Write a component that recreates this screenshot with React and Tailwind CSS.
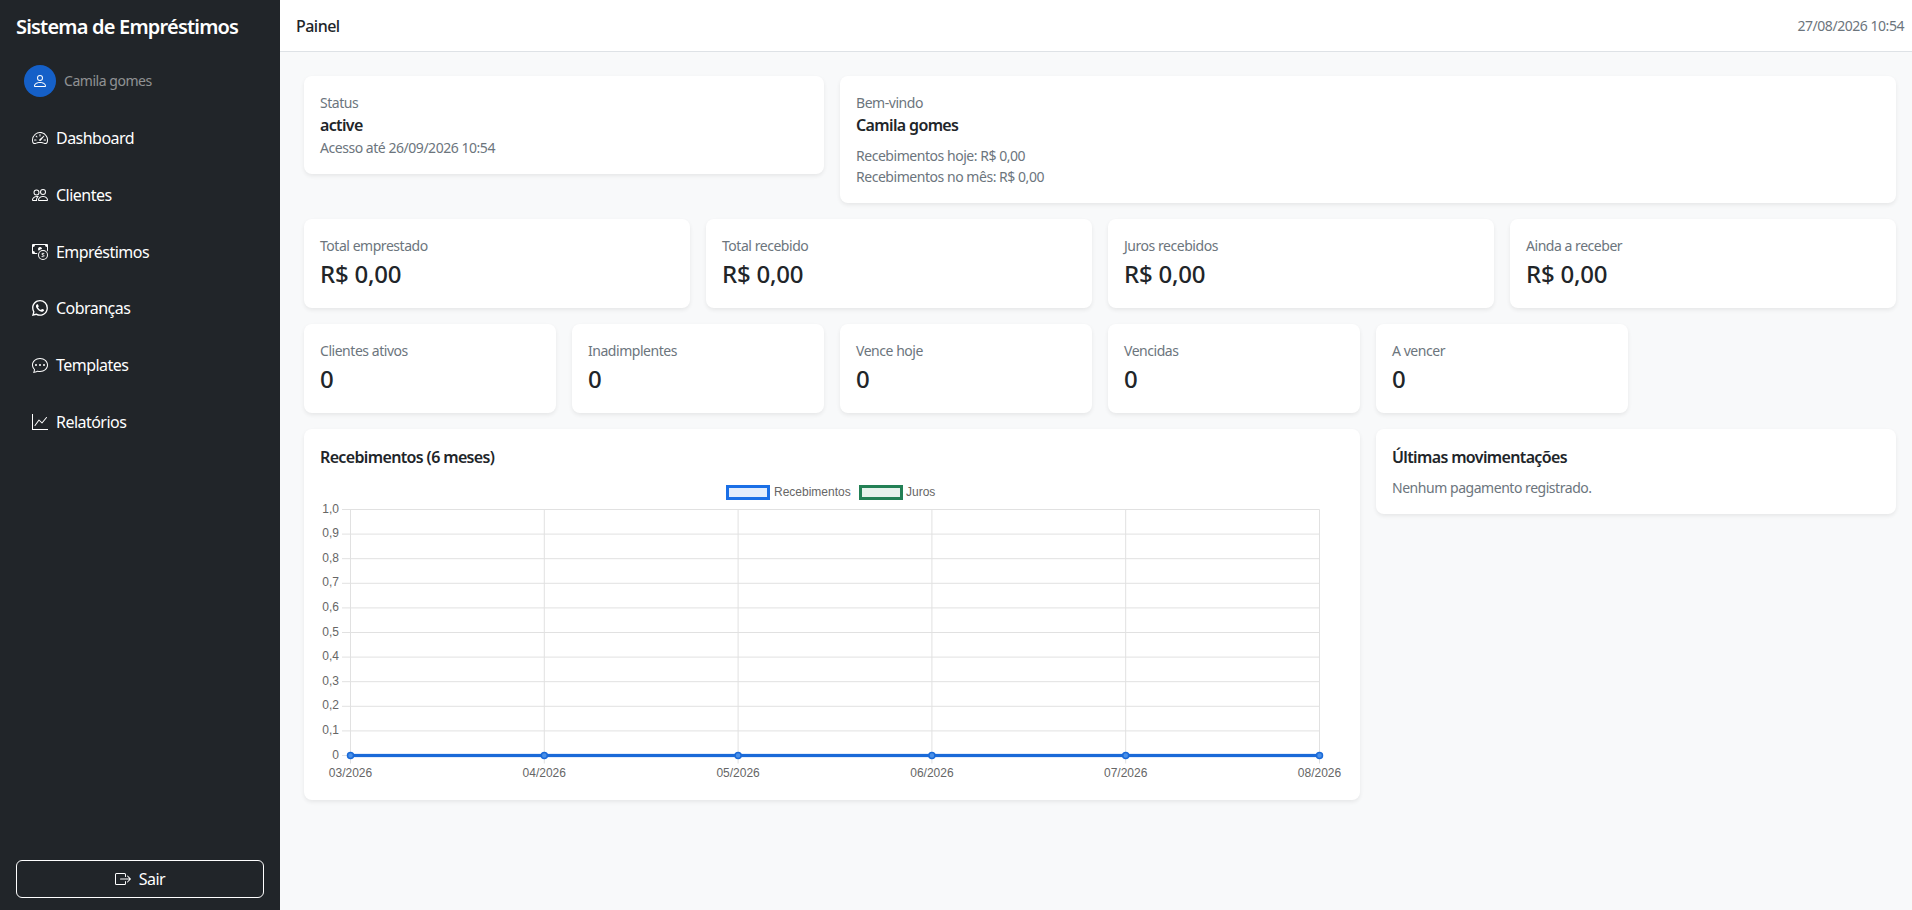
import React from 'react';
import { BsSpeedometer2, BsPeople, BsCashCoin, BsWhatsapp, BsChatDots, BsGraphUp, BsBoxArrowRight, BsPerson } from 'react-icons/bs';

const navItems = [
  { label: 'Dashboard', icon: BsSpeedometer2 },
  { label: 'Clientes', icon: BsPeople },
  { label: 'Empréstimos', icon: BsCashCoin },
  { label: 'Cobranças', icon: BsWhatsapp },
  { label: 'Templates', icon: BsChatDots },
  { label: 'Relatórios', icon: BsGraphUp },
];

const totals = ['Total emprestado', 'Total recebido', 'Juros recebidos', 'Ainda a receber'];
const counts = ['Clientes ativos', 'Inadimplentes', 'Vence hoje', 'Vencidas', 'A vencer'];

const Card = ({ className = '', children }) => (
  <div className={`bg-white rounded-lg p-4 shadow-[0_2px_4px_rgba(0,0,0,0.075)] ${className}`}>{children}</div>
);

const Muted = ({ className = '', children }) => (
  <div className={`text-sm leading-[21px] tracking-[-0.033em] text-[#6c757d] ${className}`}>{children}</div>
);

const Strong = ({ className = '', children }) => (
  <div className={`text-base leading-6 font-semibold tracking-[-0.04em] ${className}`}>{children}</div>
);

const StatCard = ({ label, value }) => (
  <Card>
    <Muted>{label}</Muted>
    <div className="text-2xl leading-9 font-medium tracking-[-0.01em] text-[#212529]">{value}</div>
  </Card>
);

const Chart = () => {
  const xs = [350.5, 544.3, 738.1, 931.9, 1125.7, 1319.5];
  const months = ['03/2026', '04/2026', '05/2026', '06/2026', '07/2026', '08/2026'];
  const ticks = ['1,0', '0,9', '0,8', '0,7', '0,6', '0,5', '0,4', '0,3', '0,2', '0,1', '0'];
  const top = 509.5;
  const zero = 755.5;
  const step = (zero - top) / 10;

  return (
    <svg width="1024" height="307" viewBox="320 477 1024 307" className="block" fontFamily="'Liberation Sans', Arial, sans-serif" fontSize="12" fill="#666666">
      {/* legend */}
      <rect x="727.5" y="486.5" width="41" height="12" fill="#e3edfc" stroke="#1a6fe6" strokeWidth="3" />
      <text x="774" y="495.5">Recebimentos</text>
      <rect x="860.5" y="486.5" width="41" height="12" fill="#e6f2ec" stroke="#238055" strokeWidth="3" />
      <text x="906" y="495.5">Juros</text>

      {/* grid */}
      {ticks.map((t, i) => (
        <g key={t}>
          <line x1="342" x2="1319.5" y1={top + i * step} y2={top + i * step} stroke="#e1e1e1" />
          <text x="339" y={top + i * step + 3} textAnchor="end">{t}</text>
        </g>
      ))}
      {xs.map((x, i) => (
        <g key={months[i]}>
          <line x1={x} x2={x} y1={top} y2={zero + 8} stroke="#e1e1e1" />
          <text x={x} y="776.5" textAnchor="middle">{months[i]}</text>
        </g>
      ))}

      {/* series */}
      <line x1={xs[0]} x2={xs[5]} y1={zero} y2={zero} stroke="#e3edfc" strokeWidth="5" />
      <line x1={xs[0]} x2={xs[5]} y1={zero} y2={zero} stroke="#1a6ad8" strokeWidth="3" />
      {xs.map((x) => (
        <circle key={x} cx={x} cy={zero} r="3" fill="#4a90e8" stroke="#1a6ad8" strokeWidth="1.5" />
      ))}
    </svg>
  );
};

export default function App() {
  return (
    <div className="flex h-[910px] overflow-hidden bg-[#f8f9fa] font-['Noto_Sans',sans-serif] text-[#212529]">
      {/* Sidebar */}
      <aside className="w-[280px] shrink-0 bg-[#212529] text-white flex flex-col px-4 pt-3 pb-3">
        <h1 className="text-xl leading-[30px] font-semibold tracking-[-0.04em]">Sistema de Empréstimos</h1>
        <div className="flex items-center gap-2 px-2 mt-[23px]">
          <span className="w-8 h-8 rounded-full bg-[#1560c8] flex items-center justify-center">
            <BsPerson className="w-4 h-4" />
          </span>
          <span className="text-sm tracking-[-0.033em] text-white/50">Camila gomes</span>
        </div>
        <nav className="flex flex-col gap-[16.8px] mt-[21px] flex-1">
          {navItems.map(({ label, icon: Icon }) => (
            <a key={label} className="flex items-center gap-2 h-10 px-4 text-base tracking-[-0.033em]">
              <Icon className="w-4 h-4" />
              {label}
            </a>
          ))}
        </nav>
        <button className="h-[38px] rounded-md border border-white flex items-center justify-center gap-2 text-base tracking-[-0.033em]">
          <BsBoxArrowRight className="w-4 h-4" />
          Sair
        </button>
      </aside>

      {/* Main */}
      <div className="flex-1 min-w-0 flex flex-col">
        <header className="h-[52px] shrink-0 bg-white border-b border-[#dee2e6] flex items-center justify-between pl-4 pr-2">
          <span className="text-base font-medium tracking-[-0.033em]">Painel</span>
          <span className="text-sm tracking-[-0.033em] text-[#6c757d]">27/08/2026 10:54</span>
        </header>

        <main className="pt-6 pl-6 pr-4 flex flex-col gap-4">
          <div className="grid grid-cols-3 gap-4 items-start">
            <Card>
              <Muted>Status</Muted>
              <Strong>active</Strong>
              <Muted>Acesso até 26/09/2026 10:54</Muted>
            </Card>
            <Card className="col-span-2">
              <Muted>Bem-vindo</Muted>
              <Strong>Camila gomes</Strong>
              <Muted className="mt-2">Recebimentos hoje: R$ 0,00</Muted>
              <Muted>Recebimentos no mês: R$ 0,00</Muted>
            </Card>
          </div>

          <div className="grid grid-cols-4 gap-4">
            {totals.map((t) => <StatCard key={t} label={t} value="R$ 0,00" />)}
          </div>

          <div className="grid grid-cols-6 gap-4">
            {counts.map((t) => <StatCard key={t} label={t} value="0" />)}
          </div>

          <div className="grid grid-cols-3 gap-4 items-start">
            <Card className="col-span-2">
              <Strong className="mb-2">Recebimentos (6 meses)</Strong>
              <Chart />
            </Card>
            <Card>
              <Strong className="mb-2">Últimas movimentações</Strong>
              <Muted>Nenhum pagamento registrado.</Muted>
            </Card>
          </div>
        </main>
      </div>
    </div>
  );
}
